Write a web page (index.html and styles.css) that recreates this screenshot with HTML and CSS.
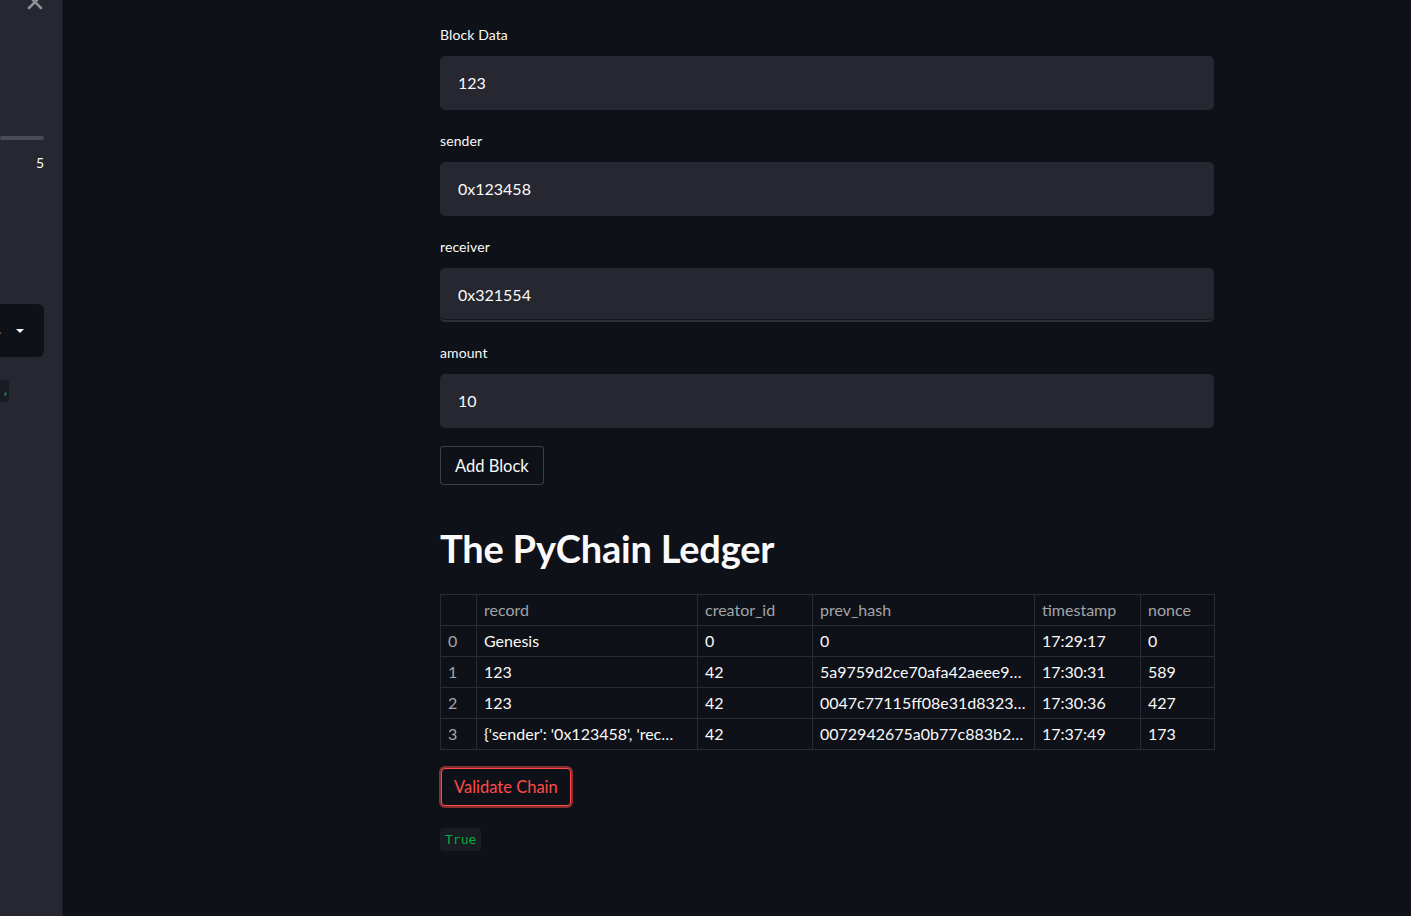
FILE: index.html
```html
<!DOCTYPE html>
<html>
<head>
<meta charset="utf-8">
<link rel="stylesheet" href="styles.css">
</head>
<body>
<div class="app">
  <aside class="sidebar">
    <div class="close">
      <svg width="16" height="12" viewBox="0 0 16 12"><path d="M2 -4 L14 8 M14 -4 L2 8" stroke="#8e9096" stroke-width="2.6" stroke-linecap="round" fill="none"/></svg>
    </div>
    <div class="slider-track"></div>
    <div class="slider-val">5</div>
    <div class="select">
      <span class="select-text">.</span>
      <svg class="caret" width="10" height="6" viewBox="0 0 10 6"><path d="M1 1 L9 1 L5 5 Z" fill="#fafafa"/></svg>
    </div>
    <div class="side-code"><span>,</span></div>
  </aside>
  <main class="main">
    <div class="topbar"></div>
    <div class="content">
      <div class="field">
        <label class="label">Block Data</label>
        <div class="input">123</div>
      </div>
      <div class="field">
        <label class="label">sender</label>
        <div class="input">0x123458</div>
      </div>
      <div class="field">
        <label class="label">receiver</label>
        <div class="input input-edge">0x321554</div>
      </div>
      <div class="field">
        <label class="label">amount</label>
        <div class="input">10</div>
      </div>
      <button class="btn">Add Block</button>
      <h2 class="heading">The PyChain Ledger</h2>
      <table class="ledger">
        <colgroup>
          <col class="c-idx"><col class="c-record"><col class="c-creator"><col class="c-prev"><col class="c-time"><col class="c-nonce">
        </colgroup>
        <thead>
          <tr><th class="idx"></th><th>record</th><th>creator_id</th><th>prev_hash</th><th>timestamp</th><th>nonce</th></tr>
        </thead>
        <tbody>
          <tr><td class="idx">0</td><td>Genesis</td><td>0</td><td>0</td><td>17:29:17</td><td>0</td></tr>
          <tr><td class="idx">1</td><td>123</td><td>42</td><td>5a9759d2ce70afa42aeee9…</td><td>17:30:31</td><td>589</td></tr>
          <tr><td class="idx">2</td><td>123</td><td>42</td><td>0047c77115ff08e31d8323…</td><td>17:30:36</td><td>427</td></tr>
          <tr><td class="idx">3</td><td>{'sender': '0x123458', 'rec…</td><td>42</td><td>0072942675a0b77c883b2…</td><td>17:37:49</td><td>173</td></tr>
        </tbody>
      </table>
      <button class="btn btn-active">Validate Chain</button>
      <div class="result"><code class="code">True</code></div>
    </div>
  </main>
</div>
</body>
</html>
```

FILE: styles.css
```css
html, body {
  margin: 0;
  padding: 0;
  height: 100%;
  background: #0e1117;
  overflow: hidden;
}
body {
  font-family: "Source Sans Pro", Lato, "Liberation Sans", sans-serif;
  color: #fafafa;
}
.app {
  display: flex;
  height: 916px;
}
.sidebar {
  width: 63px;
  flex: none;
  background: #262730;
  border-right: 1px solid #1b1c23;
  box-sizing: border-box;
  display: flex;
  flex-direction: column;
  padding-right: 18px;
  overflow: hidden;
}
.close {
  height: 12px;
  display: flex;
  justify-content: flex-end;
  padding-right: 1px;
}
.slider-track {
  margin-top: 124px;
  height: 4px;
  border-radius: 2px;
  background: #4b4d56;
}
.slider-val {
  margin-top: 14px;
  font-size: 14px;
  line-height: 18px;
  text-align: right;
}
.select {
  margin-top: 132px;
  height: 53px;
  background: #0e1117;
  border-radius: 0 6px 6px 0;
  display: flex;
  align-items: center;
  justify-content: flex-end;
  padding-right: 19px;
  position: relative;
}
.select-text {
  position: absolute;
  left: -2px;
  top: 16px;
  color: #b0b2b8;
  font-size: 14px;
}
.caret {
  display: block;
}
.side-code {
  margin-top: 23px;
  width: 9px;
  height: 22px;
  background: #1a1c24;
  border-radius: 0 3px 3px 0;
  font-family: "DejaVu Sans Mono", monospace;
  font-size: 12px;
  color: #09ab3b;
  display: flex;
  align-items: center;
}
.side-code span {
  margin-left: 2px;
  margin-top: -2px;
}
.main {
  flex: 1;
  position: relative;
}
.topbar {
  position: absolute;
  left: 0;
  right: 0;
  top: 0;
  height: 30px;
  background: linear-gradient(#0e1117 0, #0e1117 27px, rgba(14,17,23,0.3) 30px);
  z-index: 2;
}
.content {
  width: 774px;
  margin-left: 377px;
  padding-top: 24px;
  display: flex;
  flex-direction: column;
  align-items: flex-start;
}
.field {
  width: 100%;
  margin-bottom: 20px;
}
.label {
  display: block;
  height: 22px;
  line-height: 22px;
  font-size: 14px;
  margin-bottom: 10px;
  letter-spacing: 0.1px;
}
.input {
  height: 54px;
  box-sizing: border-box;
  background: #262730;
  border-radius: 5px;
  padding-left: 18px;
  font-size: 16px;
  line-height: 54px;
}
.input-edge {
  box-shadow: inset 0 -2px 0 #2d2e37, inset 0 -3px 0 #14161c;
}
.btn {
  font-family: inherit;
  font-size: 16.5px;
  color: #fafafa;
  background: #0e1117;
  border: 1px solid rgba(250,250,250,0.2);
  border-radius: 4px;
  height: 39px;
  padding: 0 14px;
  margin-top: -2px;
  cursor: pointer;
}
.heading {
  font-size: 38px;
  font-weight: 700;
  margin: 40px 0 0 0;
  line-height: 46px;
  height: 46px;
  letter-spacing: -0.2px;
}
.ledger {
  margin-top: 23px;
  width: 774px;
  border-collapse: collapse;
  font-size: 16px;
  table-layout: fixed;
}
.c-idx { width: 36px; }
.c-record { width: 221px; }
.c-creator { width: 115px; }
.c-prev { width: 222px; }
.c-time { width: 106px; }
.c-nonce { width: 74px; }
.ledger th, .ledger td {
  box-sizing: border-box;
  border: 1px solid #2a2c33;
  height: 31px;
  padding: 0 7px 2px 7px;
  text-align: left;
  font-weight: 400;
  white-space: nowrap;
  overflow: hidden;
}
.ledger th {
  color: #a3a4a9;
}
.ledger td.idx {
  color: #a3a4a9;
}
.btn-active {
  margin-top: 18px;
  height: 38px;
  padding: 0 12px;
  color: #ff4b4b;
  border: 1px solid #ff4b4b;
  box-shadow: 0 0 0 2px rgba(255,75,75,0.5);
  margin-left: 1px;
}
.result {
  margin-top: 22px;
}
.code {
  display: inline-block;
  background: #1a1c24;
  color: #09ab3b;
  font-family: "DejaVu Sans Mono", monospace;
  font-size: 13px;
  line-height: 23px;
  padding: 0 5px;
  border-radius: 4px;
}
```
